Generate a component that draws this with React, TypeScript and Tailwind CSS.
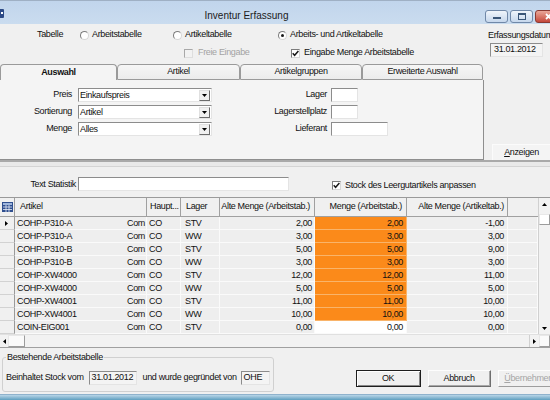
import React from "react";

const rows: [string, string, string, string, string][] = [
  ["COHP-P310-A", "STV", "2,00", "2,00", "-1,00"],
  ["COHP-P310-A", "WW", "3,00", "3,00", "3,00"],
  ["COHP-P310-B", "STV", "5,00", "5,00", "9,00"],
  ["COHP-P310-B", "WW", "3,00", "3,00", "3,00"],
  ["COHP-XW4000", "STV", "12,00", "12,00", "11,00"],
  ["COHP-XW4000", "WW", "5,00", "5,00", "5,00"],
  ["COHP-XW4001", "STV", "11,00", "11,00", "10,00"],
  ["COHP-XW4001", "WW", "10,00", "10,00", "10,00"],
  ["COIN-EIG001", "STV", "0,00", "0,00", "0,00"],
];

function Radio({ checked }: { checked?: boolean }) {
  return (
    <span className="inline-flex h-[9px] w-[9px] shrink-0 items-center justify-center rounded-full border border-[#7c7c7c] border-r-[#d6d6d6] border-b-[#d6d6d6] bg-white">
      {checked && <span className="h-[3px] w-[3px] rounded-full bg-[#1a1a1a]" />}
    </span>
  );
}

function Check({ checked, disabled }: { checked?: boolean; disabled?: boolean }) {
  return (
    <span
      className={`inline-flex h-[9px] w-[9px] shrink-0 items-center justify-center border ${
        disabled
          ? "border-[#a8a8a8] border-r-[#dedede] border-b-[#dedede] bg-[#f2f2f2]"
          : "border-[#7c7c7c] border-r-[#d6d6d6] border-b-[#d6d6d6] bg-white"
      }`}
    >
      {checked && (
        <svg width="7" height="7" viewBox="0 0 7 7">
          <path d="M0.7 3.3 L2.6 5.3 L6.4 1.1" stroke="#1a1a1a" strokeWidth="1.5" fill="none" />
        </svg>
      )}
    </span>
  );
}

const sunken = "border border-[#8c8c8c] border-r-[#e4e4e4] border-b-[#e4e4e4]";

function Select({ value }: { value: string }) {
  return (
    <div className={`flex h-[14px] w-[134px] items-center bg-white pl-[1px] ${sunken}`}>
      <span className="flex-1 leading-[12px]">{value}</span>
      <span className="mr-[1px] flex h-[11px] w-[11px] items-center justify-center border border-[#e0e0e0] border-r-[#6b6b6b] border-b-[#6b6b6b] bg-[#f0f0f0]">
        <svg width="5" height="3" viewBox="0 0 5 3">
          <path d="M0 0H5L2.5 3Z" fill="#000" />
        </svg>
      </span>
    </div>
  );
}

function Tri({ dir }: { dir: "up" | "down" | "left" | "right" }) {
  const d =
    dir === "up"
      ? "M0 3H5L2.5 0Z"
      : dir === "down"
      ? "M0 0H5L2.5 3Z"
      : dir === "left"
      ? "M3 0V5L0 2.5Z"
      : "M0 0V5L3 2.5Z";
  const w = dir === "up" || dir === "down" ? 5 : 3;
  const h = dir === "up" || dir === "down" ? 3 : 5;
  return (
    <svg width={w} height={h} viewBox={`0 0 ${w} ${h}`}>
      <path d={d} fill="#000" />
    </svg>
  );
}

function Tab({ label, w, active }: { label: string; w: string; active?: boolean }) {
  return (
    <div
      className={`${w} flex h-[16px] items-center justify-center rounded-t-[4px] border-t border-l border-r border-[#9a9a9a] ${
        active ? "bg-[#f4f4f4] font-bold" : "border-b bg-gradient-to-b from-[#f6f6f6] to-[#ececec]"
      }`}
    >
      {label}
    </div>
  );
}

export default function App() {
  const cell = "flex h-[13px] items-center border-b border-r border-[#fafafa] leading-[12px] whitespace-nowrap";
  return (
    <div className="flex h-[400px] w-[550px] flex-col overflow-hidden bg-[#f0f0f0] font-['Liberation_Sans',Arial,sans-serif] text-[9px] tracking-[-0.35px] text-[#111]">
      {/* Title bar */}
      <div className="flex h-[24px] items-start border-t border-[#9fb0c4] bg-gradient-to-b from-[#c1d5ec] to-[#cadcef]">
        <div className="flex h-full w-[8px] items-center">
          <div className="mt-[1px] h-[9px] w-[4px] rounded-r-[1px] bg-[#2c4a86]">
            <div className="ml-[1px] mt-[3px] h-[2px] w-[2px] bg-white" />
          </div>
        </div>
        <div className="flex-1 pt-[7px] text-center text-[10px] tracking-normal text-[#1b1b1b]">Inventur Erfassung</div>
        <div className="flex w-[65px] gap-[2px] overflow-hidden pt-[9px]">
          <div className="flex h-[13px] w-[23px] shrink-0 items-end justify-center rounded-[3px] border border-[#7088a8] bg-gradient-to-b from-[#f0f5fb] to-[#c6d7ec] pb-[3px]">
            <span className="h-[2px] w-[8px] bg-[#3a5678]" />
          </div>
          <div className="flex h-[13px] w-[23px] shrink-0 items-center justify-center rounded-[3px] border border-[#7088a8] bg-gradient-to-b from-[#f0f5fb] to-[#c6d7ec]">
            <span className="h-[7px] w-[8px] border border-t-2 border-[#3a5678]" />
          </div>
          <div className="flex h-[13px] w-[40px] shrink-0 items-center justify-start rounded-[3px] border border-[#8b3a32] bg-gradient-to-b from-[#e9a799] to-[#c4463a] pl-[9px]">
            <svg width="7" height="7" viewBox="0 0 7 7">
              <path d="M1 1L6 6M6 1L1 6" stroke="#fff" strokeWidth="1.8" />
            </svg>
          </div>
        </div>
      </div>

      {/* Options */}
      <div className="flex h-[40px]">
        <div className="flex w-[488px] flex-col gap-[4px] pt-[4px]">
          <div className="flex h-[14px] items-center">
            <span className="w-[80px] pl-[37px]">Tabelle</span>
            <span className="flex w-[93px] items-center gap-[3px]">
              <Radio />
              Arbeitstabelle
            </span>
            <span className="flex w-[105px] items-center gap-[3px]">
              <Radio />
              Artikeltabelle
            </span>
            <span className="flex items-center gap-[3px]">
              <Radio checked />
              Arbeits- und Artikeltabelle
            </span>
          </div>
          <div className="flex h-[14px] items-center">
            <span className="ml-[184px] flex w-[107px] items-center gap-[5px] text-[#a3a3a3]">
              <Check disabled />
              Freie Eingabe
            </span>
            <span className="flex items-center gap-[4px]">
              <Check checked />
              Eingabe Menge Arbeitstabelle
            </span>
          </div>
        </div>
        <div className="flex-1 overflow-hidden whitespace-nowrap pt-[5px]">
          <div className="leading-[12px]">Erfassungsdatum</div>
          <div className={`ml-[2px] mt-[2px] flex h-[14px] w-[53px] items-center bg-[#f4f4f4] pl-[3px] ${sunken}`}>31.01.2012</div>
        </div>
      </div>

      {/* Tabs */}
      <div className="flex h-[16px] items-end">
        <Tab label="Auswahl" w="w-[117px]" active />
        <Tab label="Artikel" w="w-[123px]" />
        <Tab label="Artikelgruppen" w="w-[122px]" />
        <Tab label="Erweiterte Auswahl" w="w-[121px]" />
      </div>

      {/* Panel */}
      <div className="flex h-[80px]">
        <div className="flex w-[484px] flex-col gap-[3px] border-r border-b border-[#8e8e8e] bg-[#f4f4f4] pt-[8px]">
          {[
            ["Preis", "Einkaufspreis", "Lager", "w-[27px]"],
            ["Sortierung", "Artikel", "Lagerstellplatz", "w-[27px]"],
            ["Menge", "Alles", "Lieferant", "w-[57px]"],
          ].map(([l, v, r, iw]) => (
            <div key={l} className="flex h-[14px] items-center">
              <span className="w-[72px] text-right">{l}</span>
              <span className="ml-[6px]">
                <Select value={v} />
              </span>
              <span className="w-[115px] text-right">{r}</span>
              <span className={`ml-[4px] h-[14px] ${iw} bg-white ${sunken}`} />
            </div>
          ))}
        </div>
        <div className="flex flex-1 items-end">
          <div className="ml-[8px] flex h-[16px] flex-1 items-center justify-center border-t border-l border-[#fbfbfb] bg-[#f4f4f4]">
            <span>
              <u className="underline-offset-1">A</u>nzeigen
            </span>
          </div>
        </div>
      </div>

      {/* Separator */}
      <div className="h-[7px] border-t-2 border-b border-t-[#a9a9a9] border-b-[#d4d4d4] bg-[#e9e9e9]" />

      {/* Text Statistik */}
      <div className="flex h-[30px] items-start pt-[10px]">
        <span className="mt-[1px] w-[76px] text-right">Text Statistik</span>
        <span className={`ml-[2px] h-[14px] w-[211px] bg-white ${sunken}`} />
        <span className="ml-[43px] mt-[2px] flex items-center gap-[4px]">
          <Check checked />
          Stock des Leergutartikels anpassen
        </span>
      </div>

      {/* Grid */}
      <div className="flex h-[150px] flex-col border-t border-[#9a9a9a]">
        <div className="flex h-[136px]">
          <div className="flex w-[538px] flex-col">
            <div className="flex h-[19px] border-b border-[#a0a0a0] bg-[#f0f0f0]">
              <div className="flex w-[15px] items-center justify-center border-r border-[#a0a0a0]">
                <svg width="11" height="10" viewBox="0 0 11 10">
                  <rect x="0" y="0" width="11" height="10" fill="#2f4f8f" />
                  <rect x="1" y="1" width="9" height="2" fill="#9fb6dc" />
                  <path d="M1 5H10M1 7.5H10M4 3V10M7 3V10" stroke="#e8eef8" strokeWidth="0.8" />
                </svg>
              </div>
              <div className="flex w-[132px] items-center border-r border-[#a0a0a0] pl-[5px]">Artikel</div>
              <div className="flex w-[34px] items-center border-r border-[#a0a0a0] pl-[3px]">Haupt...</div>
              <div className="flex w-[39px] items-center border-r border-[#a0a0a0] pl-[5px]">Lager</div>
              <div className="flex w-[95px] items-center justify-end border-r border-[#a0a0a0] pr-[4px] whitespace-nowrap">Alte Menge (Arbeitstab.)</div>
              <div className="flex w-[92px] items-center justify-end border-r border-[#a0a0a0] pr-[4px] whitespace-nowrap">Menge (Arbeitstab.)</div>
              <div className="flex w-[101px] items-center justify-end border-r border-[#a0a0a0] pr-[3px] whitespace-nowrap">Alte Menge (Artikeltab.)</div>
              <div className="w-[30px]" />
            </div>
            {rows.map((r, i) => (
              <div key={i} className="flex h-[13px] bg-[#eeeeee]">
                <div className="flex h-[13px] w-[15px] items-center border-r border-b border-r-[#9a9a9a] border-b-[#d2d2d2] bg-[#f0f0f0] pl-[5px]">
                  {i === 0 && <Tri dir="right" />}
                </div>
                <div className={`${cell} w-[132px] justify-between pl-[2px] pr-[1px]`}>
                  <span>{r[0]}</span>
                  <span>Com</span>
                </div>
                <div className={`${cell} w-[34px] pl-[2px]`}>CO</div>
                <div className={`${cell} w-[39px] pl-[4px]`}>{r[1]}</div>
                <div className={`${cell} w-[95px] justify-end pr-[2px]`}>{r[2]}</div>
                <div
                  className={`flex h-[13px] w-[92px] items-center justify-end border-b border-r pr-[3px] leading-[12px] ${
                    i < 8 ? "border-[#f9b46a] bg-[#fb8a1a]" : "border-[#fafafa] bg-white"
                  }`}
                >
                  {r[3]}
                </div>
                <div className={`${cell} w-[101px] justify-end pr-[3px]`}>{r[4]}</div>
                <div className={`${cell} w-[30px]`} />
              </div>
            ))}
          </div>
          <div className="flex w-[12px] flex-col border-l border-[#d0d0d0] bg-[#f2f2f2]">
            <div className="flex h-[12px] items-center justify-center">
              <Tri dir="up" />
            </div>
            <div className="mt-[4px] h-[11px] border border-[#9c9c9c] border-l-[#e8e8e8] border-t-[#e8e8e8] bg-white" />
            <div className="flex-1" />
            <div className="flex h-[12px] items-center justify-center">
              <Tri dir="down" />
            </div>
          </div>
        </div>
        <div className="flex h-[14px] items-center border-t border-b border-t-[#e0e0e0] border-b-[#a0a0a0] bg-[#f2f2f2]">
          <div className="flex w-[8px] justify-center">
            <Tri dir="left" />
          </div>
          <div className="h-[12px] w-[17px] border border-[#9c9c9c] border-l-[#e8e8e8] border-t-[#e8e8e8] bg-[#fafafa]" />
          <div className="flex-1" />
          <div className="flex h-[12px] w-[10px] items-center justify-center border-l border-[#d0d0d0]">
            <Tri dir="right" />
          </div>
          <div className="h-[12px] w-[11px] border border-[#9c9c9c] border-l-[#e8e8e8] border-t-[#e8e8e8] bg-[#fafafa]" />
        </div>
      </div>

      {/* Bottom */}
      <div className="flex h-[47px]">
        <fieldset className="ml-[2px] mt-[5px] h-[40px] w-[264px] rounded-[3px] border border-[#d0d0d0] px-[3px]">
          <legend className="px-[1px] leading-[11px]">Bestehende Arbeitstabelle</legend>
          <div className="mt-[8px] flex items-center whitespace-nowrap">
            <span>Beinhaltet Stock vom</span>
            <span className={`ml-[5px] flex h-[14px] w-[48px] items-center bg-[#f4f4f4] pl-[2px] ${sunken}`}>31.01.2012</span>
            <span className="ml-[6px]">und wurde gegründet von</span>
            <span className={`ml-[4px] flex h-[14px] w-[29px] items-center bg-[#f4f4f4] pl-[2px] ${sunken}`}>OHE</span>
          </div>
        </fieldset>
        <div className="ml-[82px] mt-[23px] flex h-[17px] gap-[7px]">
          <div className="flex w-[65px] items-center justify-center border border-[#1e1e1e] bg-[#f0f0f0] shadow-[inset_1px_1px_0_#ffffff,inset_-1px_-1px_0_#888888]">
            OK
          </div>
          <div className="flex w-[63px] items-center justify-center border border-[#fdfdfd] border-r-[#6e6e6e] border-b-[#6e6e6e] bg-[#f0f0f0] shadow-[inset_-1px_-1px_0_#a8a8a8]">
            Abbruch
          </div>
          <div className="flex w-[62px] shrink-0 items-center justify-center border border-[#fdfdfd] border-r-[#9e9e9e] border-b-[#9e9e9e] bg-[#f0f0f0] text-[#a6a6a6]">
            <span>
              <u>Ü</u>bernehmen
            </span>
          </div>
        </div>
      </div>

      {/* Bottom window border */}
      <div className="h-[6px] border-t border-[#8fb2cc] bg-gradient-to-b from-[#b9d6e8] to-[#5f9fbf]" />
    </div>
  );
}
